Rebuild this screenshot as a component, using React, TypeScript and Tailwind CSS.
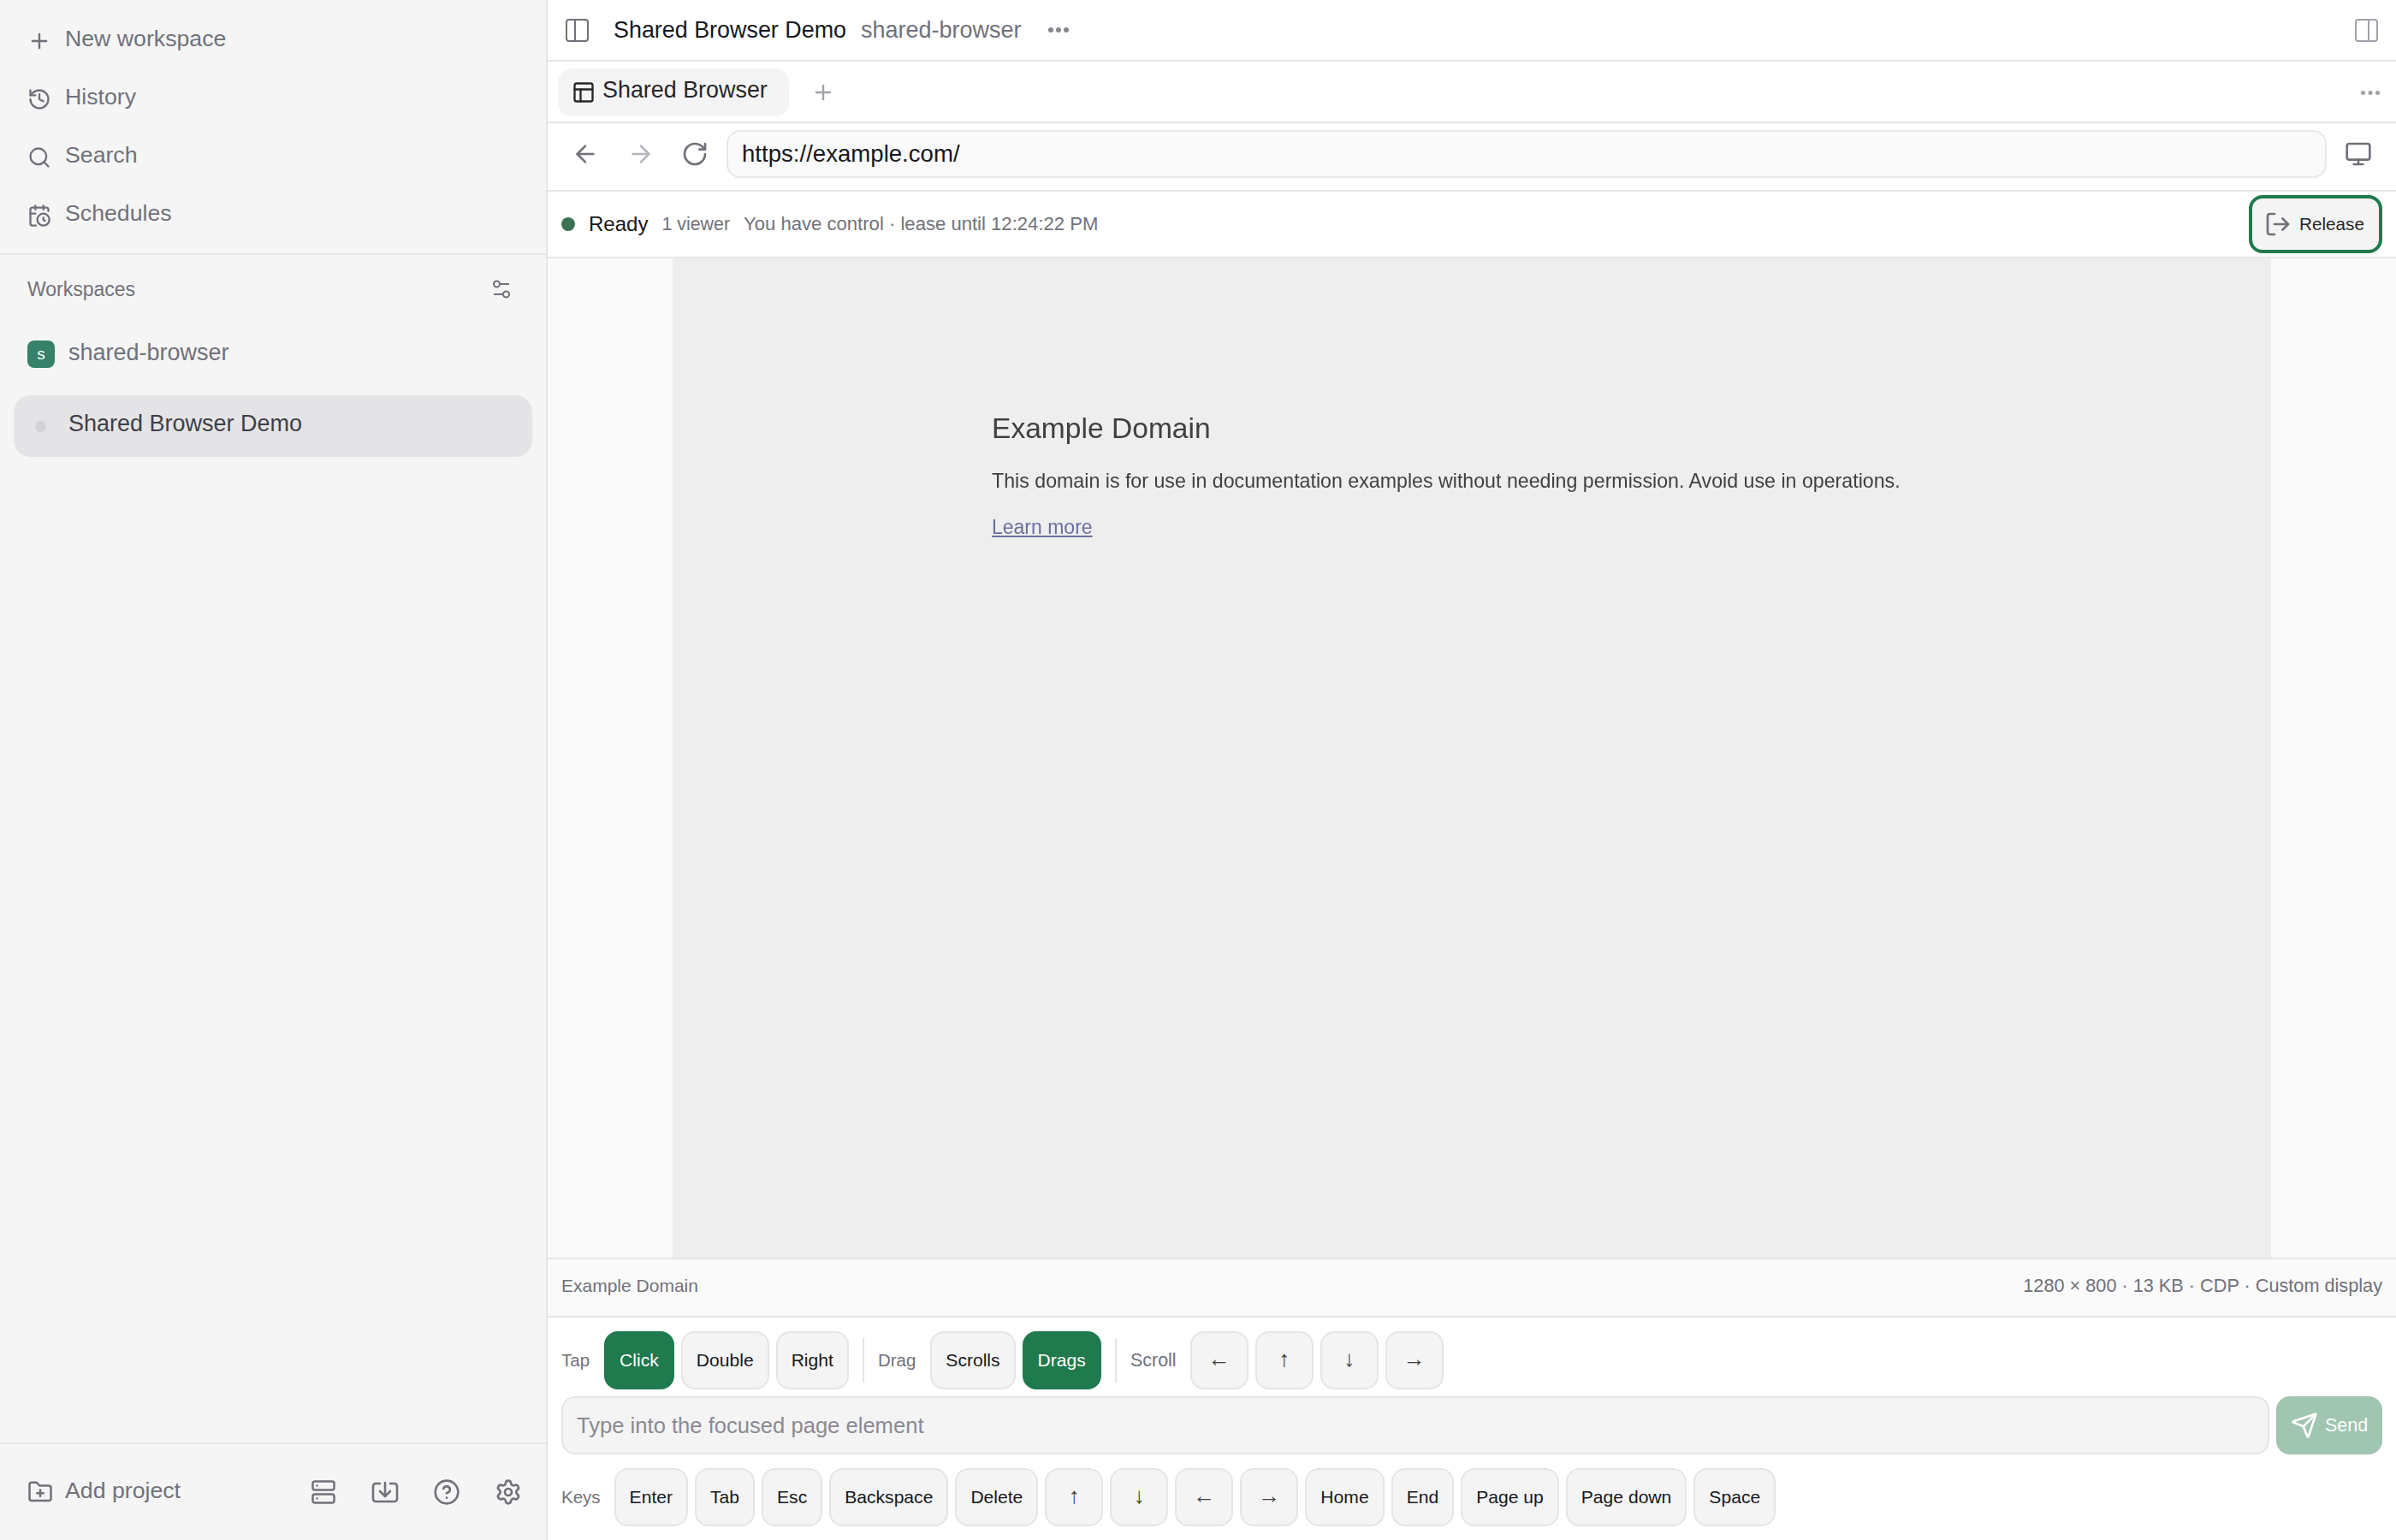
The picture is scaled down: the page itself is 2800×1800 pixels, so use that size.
import React from "react";
import { Plus, History, Search, CalendarClock, LogOut, Monitor, ArrowLeft, ArrowRight, RotateCw, Send, FolderPlus, Server, CircleHelp, Settings, Layout } from "lucide-react";

function Key({ children, active }: { children: React.ReactNode; active?: boolean }) {
  return (
    <button
      className={
        active
          ? "h-[68px] rounded-[16px] border-2 border-[#1f7a4d] bg-[#1f7a4d] px-[16px] text-[21.1px] text-white"
          : "h-[68px] rounded-[16px] border-2 border-[#e5e5e5] bg-[#f4f4f4] px-[16px] text-[21.1px] text-[#18181b]"
      }
    >
      {children}
    </button>
  );
}

function Arrow({ children }: { children: React.ReactNode }) {
  return (
    <button className="h-[68px] w-[68px] rounded-[16px] border-2 border-[#e5e5e5] bg-[#f4f4f4] pb-[4px] text-[26px] text-[#3f3f46]">
      {children}
    </button>
  );
}

function NavRow({ icon, label }: { icon: React.ReactNode; label: string }) {
  return (
    <div className="flex h-[68px] items-center gap-[16px] pl-[32px] text-[26.7px] text-[#71717a]">
      <span className="flex h-[28px] w-[28px] translate-y-[3px] items-center justify-center">{icon}</span>
      <span>{label}</span>
    </div>
  );
}

function Dots({ className, w, r }: { className: string; w: number; r: number }) {
  return (
    <svg className={className} width={w} height={r * 2} viewBox={`0 0 ${w} ${r * 2}`} fill="currentColor">
      <circle cx={r} cy={r} r={r} />
      <circle cx={w / 2} cy={r} r={r} />
      <circle cx={w - r} cy={r} r={r} />
    </svg>
  );
}

export default function App() {
  return (
    <div className="flex h-[1800px] w-[2800px] overflow-hidden bg-white [font-family:'Liberation_Sans',sans-serif]">
      <aside className="flex h-full w-[640px] shrink-0 flex-col border-r-2 border-[#e5e5e5] bg-[#f5f5f5]">
        <div className="flex h-[296px] flex-col pt-[11px]">
          <NavRow icon={<Plus size={28} strokeWidth={2} />} label="New workspace" />
          <NavRow icon={<History size={28} strokeWidth={2} />} label="History" />
          <NavRow icon={<Search size={28} strokeWidth={2} />} label="Search" />
          <NavRow icon={<CalendarClock size={28} strokeWidth={2} />} label="Schedules" />
        </div>
        <div className="h-[2px] bg-[#e5e5e5]" />
        <div className="flex h-[80px] items-center justify-between pl-[32px] pr-[40px] text-[23px] text-[#71717a]">
          <span>Workspaces</span>
          <svg width="24" height="24" viewBox="0 0 24 24" fill="none" stroke="currentColor" strokeWidth="2">
            <circle cx="6.5" cy="6" r="3.5" />
            <path d="M10 6h11" />
            <path d="M3 18h11" />
            <circle cx="17.5" cy="18" r="3.5" />
          </svg>
        </div>
        <div className="mt-[12px] flex h-[48px] items-center gap-[16px] pl-[32px] text-[27px] text-[#71717a]">
          <span className="flex h-[32px] w-[32px] items-center justify-center rounded-[8px] bg-[#35816a] text-[19px] text-white">s</span>
          <span className="-translate-y-[2px]">shared-browser</span>
        </div>
        <div className="mx-[16px] mt-[24px] flex h-[72px] items-center rounded-[20px] bg-[#e4e4e7] pl-[25px] text-[27px] text-[#3f3f46]">
          <span className="h-[13px] w-[13px] rounded-full bg-[#d1d1d6]" />
          <span className="ml-[26px] -translate-y-[3px]">Shared Browser Demo</span>
        </div>
        <div className="flex-1" />
        <div className="h-[2px] bg-[#e5e5e5]" />
        <div className="flex h-[112px] items-center pl-[32px] text-[#71717a]">
          <FolderPlus size={30} strokeWidth={2} />
          <span className="ml-[14px] -translate-y-[2px] text-[26.7px]">Add project</span>
          <div className="ml-auto flex items-center gap-[40px] pr-[28px]">
            <span className="flex h-[32px] w-[32px] items-center justify-center"><Server size={30} strokeWidth={2} /></span>
            <svg width="32" height="32" viewBox="0 0 32 32" fill="none" stroke="currentColor" strokeWidth="2.6" strokeLinecap="round" strokeLinejoin="round">
              <path d="M10 6H5a3 3 0 0 0-3 3v15a3 3 0 0 0 3 3h22a3 3 0 0 0 3-3V9a3 3 0 0 0-3-3h-5" />
              <path d="M16 5v15M10 15l6 6 6-6" />
            </svg>
            <CircleHelp size={32} strokeWidth={2} />
            <Settings size={32} strokeWidth={2} />
          </div>
        </div>
      </aside>

      <main className="flex h-full min-w-0 flex-1 flex-col">
        <header className="flex h-[72px] shrink-0 items-center border-b-2 border-[#e5e5e5] px-[20px]">
          <svg width="28" height="28" viewBox="0 0 28 28" fill="none" stroke="#71717a" strokeWidth="2">
            <rect x="2" y="2" width="25" height="25" rx="3" />
            <path d="M12 2v25" />
          </svg>
          <span className="ml-[29px] text-[26.9px] text-[#18181b]">Shared Browser Demo</span>
          <span className="ml-[17px] text-[27px] text-[#71717a]">shared-browser</span>
          <Dots className="ml-[31px] text-[#85858d]" w={24} r={3} />
          <svg className="ml-auto text-[#a1a1aa]" width="28" height="28" viewBox="0 0 28 28" fill="none" stroke="currentColor" strokeWidth="2">
            <rect x="1" y="2" width="25" height="25" rx="3" />
            <path d="M16 2v25" />
          </svg>
        </header>
        <div className="flex h-[72px] shrink-0 items-center border-b-2 border-[#e5e5e5] pl-[12px] pr-[19px] pt-[2px]">
          <div className="flex h-[56px] w-[270px] items-center gap-[8px] rounded-[16px] bg-[#f4f4f4] pl-[16px]">
            <Layout size={28} strokeWidth={2} className="text-[#27272a]" />
            <span className="-translate-y-[3px] text-[26.9px] text-[#27272a]">Shared Browser</span>
          </div>
          <Plus size={28} className="ml-[26px] text-[#a1a1aa]" />
          <Dots className="ml-auto text-[#a1a1aa]" w={22} r={2.5} />
        </div>
        <div className="flex h-[80px] shrink-0 items-center border-b-2 border-[#e5e5e5] px-[28px] pb-[6px]">
          <ArrowLeft size={32} strokeWidth={2} className="text-[#71717a]" />
          <ArrowRight size={32} strokeWidth={2} className="ml-[33px] text-[#b4b4bb]" />
          <RotateCw size={32} strokeWidth={2} className="ml-[31px] text-[#71717a]" />
          <div className="ml-[21px] flex h-[56px] flex-1 items-center rounded-[16px] border-2 border-[#e8e8e8] bg-[#fafafa] pl-[16px] text-[27.6px] text-[#18181b]">
            https://example.com/
          </div>
          <Monitor size={32} strokeWidth={2} className="ml-[21px] text-[#71717a]" />
        </div>
        <div className="flex h-[78px] shrink-0 items-center border-b-2 border-[#e5e5e5] px-[16px]">
          <span className="h-[16px] w-[16px] rounded-full bg-[#3d7350]" />
          <span className="ml-[16px] text-[24px] text-[#18181b]">Ready</span>
          <span className="ml-[16px] text-[21.4px] text-[#71717a]">1 viewer</span>
          <span className="ml-[16px] text-[22.1px] text-[#71717a]">You have control · lease until 12:24:22 PM</span>
          <button className="ml-auto flex h-[68px] w-[156px] items-center gap-[9px] rounded-[16px] border-4 border-[#1f7a4d] bg-[#f4f4f4] pl-[14px] text-[20.7px] text-[#27272a]">
            <LogOut size={32} strokeWidth={2} className="text-[#71717a]" />
            Release
          </button>
        </div>
        <div className="flex min-h-0 flex-1 justify-center bg-[#fafafa]">
          <div className="h-full w-[1868px] bg-[#eeeeee] pl-[373px] pt-[178px]">
            <div className="text-[#404040] blur-[0.6px]">
              <div className="text-[33.6px] leading-[42px]">Example Domain</div>
              <div className="mt-[26px] text-[23.2px] leading-[28px]">This domain is for use in documentation examples without needing permission. Avoid use in operations.</div>
              <div className="mt-[26px] text-[23px] leading-[28px] text-[#6a6f9e] underline">Learn more</div>
            </div>
          </div>
        </div>
        <div className="flex h-[70px] shrink-0 items-center justify-between border-y-2 border-[#e5e5e5] bg-[#fafafa] px-[16px] text-[#71717a]">
          <span className="-translate-y-[2px] text-[21px]">Example Domain</span>
          <span className="-translate-y-[2px] text-[21.7px]">1280 × 800 · 13 KB · CDP · Custom display</span>
        </div>
        <div className="flex h-[260px] shrink-0 flex-col gap-[8px] p-[16px]">
          <div className="flex items-center gap-[8px]">
            <span className="mr-[9px] text-[20.5px] text-[#71717a]">Tap</span>
            <Key active>Click</Key>
            <Key>Double</Key>
            <Key>Right</Key>
            <span className="mx-[8px] h-[52px] w-[2px] bg-[#e5e5e5]" />
            <span className="mr-[9px] text-[20.5px] text-[#71717a]">Drag</span>
            <Key>Scrolls</Key>
            <Key active>Drags</Key>
            <span className="mx-[8px] h-[52px] w-[2px] bg-[#e5e5e5]" />
            <span className="mr-[8px] text-[21.5px] text-[#71717a]">Scroll</span>
            <Arrow>←</Arrow>
            <Arrow>↑</Arrow>
            <Arrow>↓</Arrow>
            <Arrow>→</Arrow>
          </div>
          <div className="flex gap-[8px]">
            <div className="flex h-[68px] flex-1 items-center rounded-[16px] border-2 border-[#e5e5e5] bg-[#f4f4f4] pl-[16px] text-[25.6px] text-[#8a8a93]">
              Type into the focused page element
            </div>
            <button className="flex h-[68px] w-[124px] items-center gap-[8px] rounded-[16px] bg-[#a0c5b0] pl-[17px] text-[21.5px] text-white">
              <Send size={32} strokeWidth={2} />
              Send
            </button>
          </div>
          <div className="mt-[8px] flex items-center gap-[8px]">
            <span className="mr-[8px] text-[20.5px] text-[#71717a]">Keys</span>
            <Key>Enter</Key>
            <Key>Tab</Key>
            <Key>Esc</Key>
            <Key>Backspace</Key>
            <Key>Delete</Key>
            <Arrow>↑</Arrow>
            <Arrow>↓</Arrow>
            <Arrow>←</Arrow>
            <Arrow>→</Arrow>
            <Key>Home</Key>
            <Key>End</Key>
            <Key>Page up</Key>
            <Key>Page down</Key>
            <Key>Space</Key>
          </div>
        </div>
      </main>
    </div>
  );
}
